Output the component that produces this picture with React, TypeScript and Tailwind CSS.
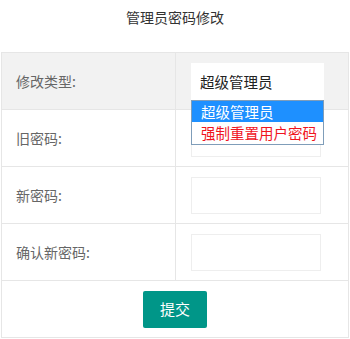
import React from 'react';

const rows = ['旧密码:', '新密码:', '确认新密码:'];

const App: React.FC = () => {
  return (
    <div className="w-[350px] h-[339px] bg-white text-[14px] text-[#333] font-['Noto_Sans_CJK_SC',sans-serif]">
      <div className="h-[52px] pt-[7px] text-center leading-[20px] text-[14px] text-[#333]">管理员密码修改</div>

      <table className="ml-[1px] w-[348px] border-collapse border border-[#e6e6e6]">
        <tbody>
          {/* 修改类型 */}
          <tr className="h-[57px] bg-[#f2f2f2]">
            <td className="w-[174px] border border-[#e6e6e6] pl-[14px] text-[#666]">修改类型:</td>
            <td className="border border-[#e6e6e6] pl-[15px]">
              <div className="relative w-[133px]">
                <div className="h-[37px] bg-white pl-[9px] leading-[37px] text-[14.5px] text-[#222]">超级管理员</div>
                <div className="absolute left-0 top-[37px] z-10 w-[133px] border border-[#7f9db9] bg-white text-[14.5px] leading-[21px]">
                  <div className="bg-[#1e90ff] pl-[9px] text-white">超级管理员</div>
                  <div className="pl-[9px] pb-[1px] text-[#f0141e]">强制重置用户密码</div>
                </div>
              </div>
            </td>
          </tr>

          {rows.map((label) => (
            <tr key={label} className="h-[57px]">
              <td className="border border-[#e6e6e6] pl-[14px] text-[#666]">{label}</td>
              <td className="border border-[#e6e6e6] pl-[15px]">
                <input
                  type="password"
                  className="block h-[37px] w-[130px] border border-[#eee] bg-white px-2 outline-none"
                />
              </td>
            </tr>
          ))}

          {/* 提交 */}
          <tr className="h-[57px]">
            <td colSpan={2} className="border border-[#e6e6e6] text-center">
              <button className="h-[37px] w-[64px] rounded-[2px] bg-[#009688] text-[15px] text-white">提交</button>
            </td>
          </tr>
        </tbody>
      </table>
    </div>
  );
};

export default App;
